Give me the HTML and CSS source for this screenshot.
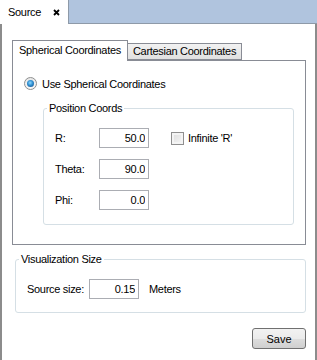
FILE: index.html
```html
<!doctype html>
<html lang="en">
    <head>
        <meta charset="UTF-8" />
        <title>Source</title>
        <link rel="stylesheet" href="styles.css">
    </head>
    <body>
        <div class="window">
            <div class="tabbar">
                <div class="doc-tab">
                    <span>Source</span>
                    <svg class="close" width="7" height="7" viewBox="0 0 7 7">
                        <path d="M1 1 L6 6 M6 1 L1 6" stroke="#000" stroke-width="1.8" />
                    </svg>
                </div>
                <div class="tab-fill"></div>
            </div>

            <div class="panel">
                <div class="tabs">
                    <div class="tab active">Spherical Coordinates</div>
                    <div class="tab">Cartesian Coordinates</div>
                </div>
                <div class="pane">
                    <label class="radio-row">
                        <span class="radio"><span class="dot"></span></span>
                        Use Spherical Coordinates
                    </label>

                    <fieldset class="group coords">
                        <legend>Position Coords</legend>
                        <div class="row">
                            <span class="lbl">R:</span>
                            <input type="text" class="num" value="50.0" />
                            <span class="check"></span>
                            <span>Infinite 'R'</span>
                        </div>
                        <div class="row">
                            <span class="lbl">Theta:</span>
                            <input type="text" class="num" value="90.0" />
                        </div>
                        <div class="row">
                            <span class="lbl">Phi:</span>
                            <input type="text" class="num" value="0.0" />
                        </div>
                    </fieldset>
                </div>

                <fieldset class="group vis">
                    <legend>Visualization Size</legend>
                    <div class="row">
                        <span class="lbl wide">Source size:</span>
                        <input type="text" class="num" value="0.15" />
                        <span class="unit">Meters</span>
                    </div>
                </fieldset>

                <div class="actions">
                    <button type="button" class="save">Save</button>
                </div>
            </div>
        </div>
    </body>
</html>
```

FILE: styles.css
```css
* {
    box-sizing: border-box;
}
body {
    margin: 0;
    font-family: "Liberation Sans", Arial, sans-serif;
    font-size: 11px;
    letter-spacing: -0.3px;
    color: #000;
    background: #fff;
}
.window {
    width: 317px;
    height: 360px;
    display: flex;
    flex-direction: column;
}
.tabbar {
    display: flex;
    height: 24px;
}
.doc-tab {
    width: 68px;
    display: flex;
    align-items: center;
    padding-left: 8px;
    gap: 12px;
    background: #fff;
}
.close {
    margin-top: 1px;
}
.tab-fill {
    flex: 1;
    background: #b0c4de;
    border-left: 1px solid #8e9aa8;
    border-bottom: 1px solid #8e9aa8;
}
.panel {
    flex: 1;
    border-left: 2px solid #8c8c8c;
    border-right: 2px solid #8c8c8c;
    padding: 16px 9px 0 10px;
}
.tabs {
    display: flex;
    align-items: flex-end;
    height: 20px;
}
.tab {
    height: 17px;
    padding: 0 5px;
    line-height: 15px;
    border: 1px solid #898c95;
    border-left: none;
    background: linear-gradient(#f2f2f2, #e0e0e0);
}
.tab.active {
    position: relative;
    height: 21px;
    padding: 2px 6px 0 6px;
    border-left: 1px solid #898c95;
    border-bottom: none;
    background: #fff;
    z-index: 1;
    margin-bottom: -1px;
}
.pane {
    border: 1px solid #898c95;
    height: 185px;
    padding-top: 16px;
}
.radio-row {
    display: flex;
    align-items: center;
    gap: 5px;
    margin-left: 11px;
    height: 13px;
}
.radio {
    width: 13px;
    height: 13px;
    border-radius: 50%;
    border: 1px solid #8e8f8f;
    background: linear-gradient(#e8e8e8, #f8f8f8);
    display: flex;
    align-items: center;
    justify-content: center;
}
.dot {
    width: 7px;
    height: 7px;
    border-radius: 50%;
    background: radial-gradient(circle at 45% 40%, #8fd8ff 0, #2f8fd0 45%, #16457e 100%);
}
.group {
    margin: 0;
    border: 1px solid #d5dfe5;
    border-radius: 3px;
    padding: 13px 0 14px 11px;
}
.group legend {
    padding: 0 2px;
    margin-left: -8px;
    line-height: 14px;
}
.coords {
    margin: 11px 11px 0 30px;
    height: 124px;
}
.row {
    display: flex;
    align-items: center;
    height: 20px;
}
.coords .row + .row {
    margin-top: 11px;
}
.lbl {
    width: 44px;
}
.lbl.wide {
    width: 62px;
}
.num {
    width: 50px;
    height: 20px;
    border: 1px solid #abadb3;
    text-align: right;
    padding: 0 3px;
    font-family: inherit;
    font-size: 11px;
    letter-spacing: -0.3px;
    color: #000;
}
.check {
    width: 13px;
    height: 13px;
    margin-left: 22px;
    margin-right: 4px;
    border: 1px solid #8f8f8f;
    background: linear-gradient(135deg, #dcdcdc, #f7f7f7);
    box-shadow: inset 0 0 0 2px #f4f4f4;
}
.vis {
    margin: 7px 0 0 3px;
    padding-left: 11px;
    padding-bottom: 13px;
}
.unit {
    margin-left: 10px;
}
.actions {
    display: flex;
    justify-content: flex-end;
    margin-top: 15px;
}
.save {
    width: 54px;
    height: 21px;
    border: 1px solid #707070;
    border-radius: 3px;
    background: linear-gradient(#f2f2f2 0, #ebebeb 50%, #dddddd 51%, #cfcfcf 100%);
    font-family: inherit;
    font-size: 11px;
    color: #000;
    padding: 0;
}
```
